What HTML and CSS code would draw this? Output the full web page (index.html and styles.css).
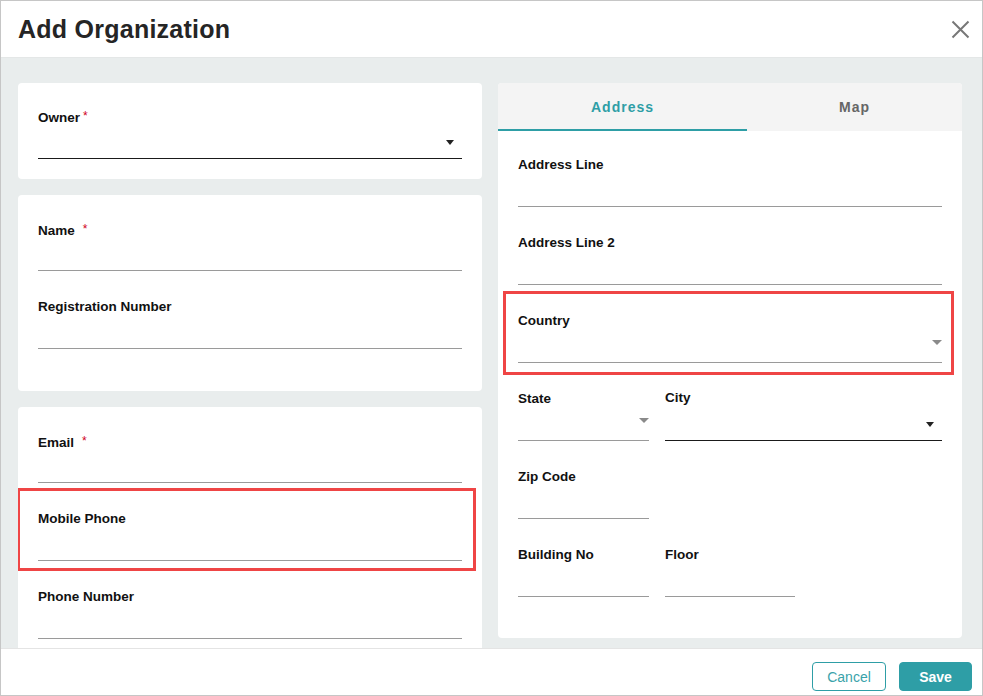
FILE: index.html
```html
<!DOCTYPE html>
<html lang="en">

<head>
    <meta charset="UTF-8">
    <title>Add Organization</title>
    <link rel="stylesheet" href="styles.css">
</head>

<body>
    <div class="dialog">
        <div class="dialog-head">
            <h1>Add Organization</h1>
            <span class="close-btn">
                <svg width="19" height="19" viewBox="0 0 19 19">
                    <path d="M1.5 1.5 L17.5 17.5 M17.5 1.5 L1.5 17.5" stroke="#777" stroke-width="2" fill="none"/>
                </svg>
            </span>
        </div>

        <div class="dialog-body">
            <div class="left-col">
                <div class="card card-first">
                    <div class="field">
                        <label>Owner<span class="req">*</span></label>
                        <div class="input dark">
                            <i class="caret dark-caret"></i>
                        </div>
                    </div>
                </div>

                <div class="card card-tall">
                    <div class="field">
                        <label>Name<span class="req wide">*</span></label>
                        <div class="input"></div>
                    </div>
                    <div class="field">
                        <label>Registration Number</label>
                        <div class="input"></div>
                    </div>
                </div>

                <div class="card card-last">
                    <div class="field">
                        <label>Email<span class="req wide">*</span></label>
                        <div class="input"></div>
                    </div>
                    <div class="highlight hl-left">
                        <div class="field">
                            <label>Mobile Phone</label>
                            <div class="input"></div>
                        </div>
                    </div>
                    <div class="field">
                        <label>Phone Number</label>
                        <div class="input"></div>
                    </div>
                </div>
            </div>

            <div class="panel">
                <div class="tabs">
                    <div class="tab active">Address</div>
                    <div class="tab tab-map">Map</div>
                </div>
                <div class="panel-body">
                    <div class="field">
                        <label>Address Line</label>
                        <div class="input"></div>
                    </div>
                    <div class="field">
                        <label>Address Line 2</label>
                        <div class="input"></div>
                    </div>
                    <div class="highlight hl-right">
                        <div class="field">
                            <label>Country</label>
                            <div class="input">
                                <i class="caret grey-caret"></i>
                            </div>
                        </div>
                    </div>
                    <div class="row">
                        <div class="field col-s">
                            <label>State</label>
                            <div class="input">
                                <i class="caret grey-caret"></i>
                            </div>
                        </div>
                        <div class="field col-l">
                            <label class="up">City</label>
                            <div class="input dark">
                                <i class="caret dark-caret"></i>
                            </div>
                        </div>
                    </div>
                    <div class="row">
                        <div class="field col-s">
                            <label>Zip Code</label>
                            <div class="input"></div>
                        </div>
                    </div>
                    <div class="row">
                        <div class="field col-s">
                            <label>Building No</label>
                            <div class="input"></div>
                        </div>
                        <div class="field col-m">
                            <label>Floor</label>
                            <div class="input"></div>
                        </div>
                    </div>
                </div>
            </div>
        </div>

        <div class="dialog-foot">
            <button class="btn btn-outline">Cancel</button>
            <button class="btn btn-primary">Save</button>
        </div>
    </div>
</body>

</html>
```

FILE: styles.css
```css
* {
    margin: 0;
    padding: 0;
    box-sizing: border-box;
}

body {
    font-family: "Liberation Sans", Arial, sans-serif;
    background: #fff;
    color: #111;
}

.dialog {
    width: 983px;
    height: 696px;
    border: 1px solid #c6c6c6;
    display: flex;
    flex-direction: column;
    overflow: hidden;
}

/* header */
.dialog-head {
    height: 57px;
    flex-shrink: 0;
    display: flex;
    align-items: center;
    justify-content: space-between;
    padding: 0 12px 0 17px;
    border-bottom: 1px solid #e4e7e7;
}

.dialog-head h1 {
    font-size: 25px;
    font-weight: bold;
    letter-spacing: 0.25px;
    color: #252525;
    padding-top: 1px;
}

.close-btn {
    display: flex;
    padding-top: 1px;
}

/* body */
.dialog-body {
    height: 590px;
    flex-shrink: 0;
    background: #e9eded;
    display: flex;
    gap: 16px;
    padding: 25px 20px 0 17px;
    overflow: hidden;
}

.left-col {
    width: 464px;
    display: flex;
    flex-direction: column;
    gap: 16px;
    overflow: hidden;
}

.card {
    background: #fff;
    border-radius: 4px;
    padding: 24px 20px 20px;
    flex-shrink: 0;
}

.card-tall {
    padding-bottom: 16px;
}

.card-last {
    padding-bottom: 60px;
}

.field {
    margin-bottom: 26px;
}

.card .field:last-child,
.highlight .field {
    margin-bottom: 0;
}

.card-tall .field:last-child {
    margin-bottom: 26px;
}

.field label {
    display: block;
    height: 20px;
    line-height: 20px;
    font-size: 13.5px;
    font-weight: bold;
    color: #111;
}

.card-first .field label {
    line-height: 18px;
}

.field label.up {
    margin-top: -1px;
    margin-bottom: 1px;
}

.req {
    color: #d0021b;
    font-size: 12px;
    font-weight: normal;
    vertical-align: 2px;
    margin-left: 3px;
}

.req.wide {
    margin-left: 8px;
}

.input {
    position: relative;
    height: 32px;
    border-bottom: 1px solid #9a9a9a;
}

.input.dark {
    border-bottom-color: #1a1a1a;
}

.caret {
    position: absolute;
    width: 0;
    height: 0;
    border-style: solid;
}

.dark-caret {
    top: 13px;
    right: 8px;
    border-width: 5px 4px 0 4px;
    border-color: #222 transparent transparent transparent;
}

.grey-caret {
    top: 9px;
    right: 0;
    border-width: 5px 5px 0 5px;
    border-color: #8a8a8a transparent transparent transparent;
}

/* red outline boxes */
.highlight {
    border: 3px solid #ef4545;
}

.hl-left {
    margin: -21px -14px 16px -21px;
    padding: 18px 11px 7px 18px;
}

.hl-right {
    margin: -20px -12px 14px -15px;
    padding: 17px 9px 9px 12px;
}

/* right panel */
.panel {
    width: 464px;
    height: 555px;
    background: #fff;
    border-radius: 4px;
    overflow: hidden;
}

.tabs {
    display: flex;
    height: 48px;
    background: #f4f4f4;
}

.tab {
    width: 249px;
    display: flex;
    align-items: center;
    justify-content: center;
    font-size: 14px;
    font-weight: bold;
    letter-spacing: 1px;
    color: #666;
    border-bottom: 2px solid transparent;
    padding-top: 1px;
}

.tab-map {
    flex: 1;
}

.tab.active {
    color: #2e9ea6;
    border-bottom-color: #2e9ea6;
}

.panel-body {
    padding: 24px 20px 0;
}

.row {
    display: flex;
    gap: 16px;
}

.col-s {
    width: 131px;
}

.col-m {
    width: 130px;
}

.col-l {
    flex: 1;
}

/* footer */
.dialog-foot {
    flex: 1;
    display: flex;
    justify-content: flex-end;
    align-items: flex-start;
    gap: 13px;
    padding: 13px 10px 0 0;
    border-top: 1px solid #e4e4e4;
    background: #fff;
}

.btn {
    height: 29px;
    border-radius: 4px;
    font-family: "Liberation Sans", Arial, sans-serif;
    font-size: 14px;
    cursor: pointer;
}

.btn-outline {
    width: 74px;
    background: #fff;
    border: 1px solid #2e9ea6;
    color: #3aa3aa;
}

.btn-primary {
    width: 73px;
    background: #2e9ea6;
    border: 1px solid #2e9ea6;
    color: #fff;
    font-weight: bold;
}
```
